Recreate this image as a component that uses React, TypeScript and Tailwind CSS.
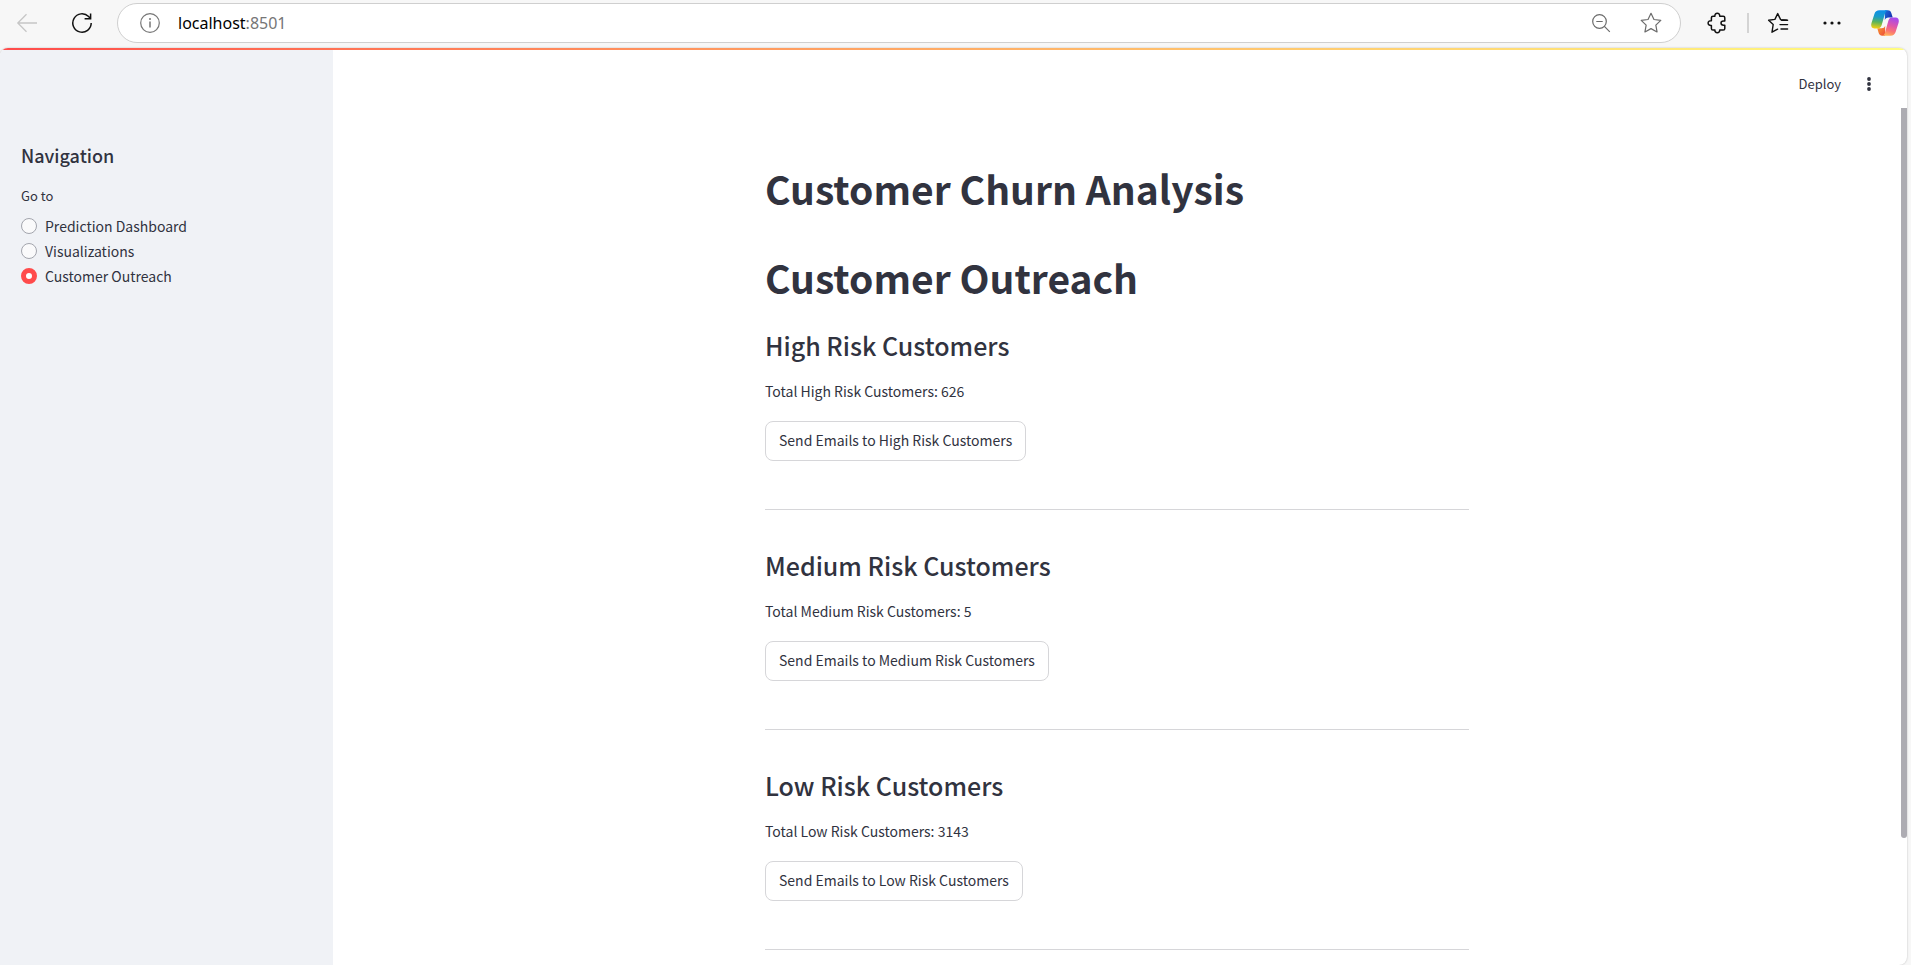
import { useState } from "react";

const sourceSans = "font-['Noto_Sans_CJK_SC',sans-serif]";

const pages = ["Prediction Dashboard", "Visualizations", "Customer Outreach"];

const segments = [
  { level: "High", total: 626 },
  { level: "Medium", total: 5 },
  { level: "Low", total: 3143 },
];

const starPath =
  "M10 1.2 L12.7 6.8 L18.9 7.6 L14.4 11.9 L15.5 18.1 L10 15.1 L4.5 18.1 L5.6 11.9 L1.1 7.6 L7.3 6.8 Z";

function CopilotLogo() {
  return (
    <svg viewBox="0 0 28 26" className="h-[26px] w-7" aria-hidden="true">
      <defs>
        <linearGradient id="cpLeft" x1="0.4" y1="0" x2="0.3" y2="1">
          <stop offset="0" stopColor="#0d8fe8" />
          <stop offset="0.35" stopColor="#1a9cc8" />
          <stop offset="0.65" stopColor="#5cb45a" />
          <stop offset="1" stopColor="#f5cf10" />
        </linearGradient>
        <linearGradient id="cpTop" x1="0" y1="0" x2="1" y2="0.6">
          <stop offset="0" stopColor="#1b6fd8" />
          <stop offset="1" stopColor="#1a2fb0" />
        </linearGradient>
        <linearGradient id="cpRight" x1="0.7" y1="0" x2="0.4" y2="1">
          <stop offset="0" stopColor="#a348f0" />
          <stop offset="0.45" stopColor="#e056a8" />
          <stop offset="0.75" stopColor="#fb7573" />
          <stop offset="1" stopColor="#ffae58" />
        </linearGradient>
        <linearGradient id="cpBottom" x1="0" y1="0" x2="1" y2="1">
          <stop offset="0" stopColor="#f8a030" />
          <stop offset="1" stopColor="#ec4a3c" />
        </linearGradient>
      </defs>
      <path d="M14 0.3 H16.8 C18.8 0.3 19.9 1.5 20.4 3.2 L21.7 7.6 H17.5 C15.6 7.6 14.3 8.6 13.8 10.3 Z" fill="url(#cpTop)" />
      <path d="M14 25.7 H11.2 C9.2 25.7 8.1 24.5 7.6 22.8 L6.3 18.2 H10.5 C12.4 18.2 13.7 17.4 14.2 15.7 Z" fill="url(#cpBottom)" />
      <path d="M8.4 0.3 H17 C15.2 0.5 14.5 2 14 3.6 L10.7 15 C10 17.3 8.8 18.4 6.6 18.4 H3.3 C0.4 18.4 -0.3 15.8 0.5 13 L3.4 4 C4.2 1.6 5.8 0.3 8.4 0.3 Z" fill="url(#cpLeft)" />
      <path d="M19.6 25.7 H11 C12.8 25.5 13.5 24 14 22.4 L17.3 11 C18 8.7 19.2 7.6 21.4 7.6 H24.7 C27.6 7.6 28.3 10.2 27.5 13 L24.6 22 C23.8 24.4 22.2 25.7 19.6 25.7 Z" fill="url(#cpRight)" />
    </svg>
  );
}

function BrowserBar() {
  return (
    <header className="flex h-12 shrink-0 items-start pt-[3px] pr-3 pl-4">
      <div className="flex h-10 w-[101px] shrink-0 items-center">
        <button aria-label="Back" className="flex w-[22px] justify-center">
          <svg viewBox="0 0 22 20" className="h-5 w-[22px]" fill="none" stroke="#c6c6c6" strokeWidth="1.3">
            <path d="M10.5 1.2 L1.8 10 L10.5 18.8 M1.8 10 H21" />
          </svg>
        </button>
        <button aria-label="Refresh" className="ml-[33px] flex w-[22px] justify-center">
          <svg viewBox="0 0 22 22" className="h-[22px] w-[22px]" fill="none" stroke="#111" strokeWidth="1.5">
            <path d="M20.2 11 A9.2 9.2 0 1 1 17.6 4.6 L19.6 6.6" />
            <path d="M19.6 1.6 V6.7 H13.6" />
          </svg>
        </button>
      </div>
      <div className="flex h-10 min-w-0 flex-1 items-center rounded-full border border-[#cfcfcf] bg-white pr-[18px] pl-[22px]">
        <svg viewBox="0 0 20 20" className="h-5 w-5 shrink-0" fill="none" stroke="#767676" strokeWidth="1.2" aria-hidden="true">
          <circle cx="10" cy="10" r="9.3" />
          <path d="M10 8.6 V14.4" strokeWidth="1.5" />
          <circle cx="10" cy="5.9" r="1" fill="#767676" stroke="none" />
        </svg>
        <a
          href="#"
          className="ml-[18px] min-w-0 flex-1 font-['Noto_Sans',sans-serif] text-base text-black"
        >
          localhost<span className="text-[#767676]">:8501</span>
        </a>
        <button aria-label="Zoom out" className="flex">
          <svg viewBox="0 0 20 20" className="h-5 w-5" fill="none" stroke="#6b6b6b" strokeWidth="1.2">
            <circle cx="8.5" cy="8.5" r="6.8" />
            <path d="M13.4 13.4 L18.8 18.8 M5.3 8.5 H11.7" />
          </svg>
        </button>
        <button aria-label="Add to favourites" className="ml-[29px] flex">
          <svg viewBox="0 0 20 20" className="h-[22px] w-[22px]" fill="none" stroke="#6b6b6b" strokeWidth="1.1" strokeLinejoin="round">
            <path d={starPath} />
          </svg>
        </button>
      </div>
      <div className="ml-[25px] flex h-10 shrink-0 items-center">
        <button aria-label="Extensions" className="flex">
          <svg viewBox="0 0 22 22" className="h-[22px] w-[22px]" fill="none" stroke="#111" strokeWidth="1.5" strokeLinejoin="round">
            <path d="M7 4.2 H8.9 C8.7 2.4 9.8 1.3 11.3 1.3 C12.8 1.3 13.9 2.4 13.7 4.2 H17.2 C18.2 4.2 18.8 4.8 18.8 5.8 V9 H17.6 C16 9 15 9.8 15 11.1 C15 12.4 16 13.2 17.6 13.2 H18.8 V16.4 C18.8 17.4 18.2 18 17.2 18 H13.7 C13.9 19.7 12.8 20.7 11.3 20.7 C9.8 20.7 8.7 19.7 8.9 18 H7 C6 18 5.4 17.4 5.4 16.4 V13.5 C3.3 13.7 2.1 12.6 2.1 11.1 C2.1 9.6 3.3 8.5 5.4 8.7 V5.8 C5.4 4.8 6 4.2 7 4.2 Z" />
          </svg>
        </button>
        <span className="ml-[19px] h-5 w-0.5 bg-[#d4d4d4]" />
        <button aria-label="Favourites" className="ml-[18px] flex">
          <svg viewBox="0 0 22 22" className="h-[22px] w-[22px]" fill="none" stroke="#111" strokeWidth="1.4" strokeLinejoin="round" strokeLinecap="round">
            <path d="M19.6 8.2 L13.6 7.6 L10.7 1.6 L7.9 7.4 L1.6 8.2 L6.2 12.5 L5 20.2 L10.6 17.2" />
            <path d="M14.6 8.2 H20.6 M13 12.6 H20.6 M14 17 H20.6" />
          </svg>
        </button>
        <button aria-label="Settings and more" className="ml-[33px] flex">
          <svg viewBox="0 0 20 4" className="h-1 w-5" fill="#111">
            <circle cx="3" cy="2" r="1.6" />
            <circle cx="10" cy="2" r="1.6" />
            <circle cx="17" cy="2" r="1.6" />
          </svg>
        </button>
        <button aria-label="Copilot" className="ml-[29px] flex">
          <CopilotLogo />
        </button>
      </div>
    </header>
  );
}

function Sidebar() {
  const [page, setPage] = useState("Customer Outreach");
  return (
    <aside className="w-[333px] shrink-0 bg-[#f0f2f6] px-[21px] pt-[95px]">
      <h2 className="text-lg leading-6 font-medium">Navigation</h2>
      <fieldset className="mt-[19px]">
        <legend className="text-[13px] leading-5">Go to</legend>
        <div className="mt-[7px]">
          {pages.map((name) => (
            <label key={name} className="flex h-[25px] items-center gap-2 text-sm leading-5">
              <input
                type="radio"
                name="page"
                checked={page === name}
                onChange={() => setPage(name)}
                className="h-4 w-4 appearance-none rounded-full border border-[#a3a5ad] bg-[#fafafb] checked:border-[5px] checked:border-[#ff4b4b] checked:bg-white"
              />
              {name}
            </label>
          ))}
        </div>
      </fieldset>
    </aside>
  );
}

export default function App() {
  return (
    <div className={`flex h-screen flex-col overflow-hidden bg-[#f7f7f7] text-[#31333f] ${sourceSans}`}>
      <BrowserBar />
      <div className="relative mr-1 flex min-h-0 flex-1 overflow-hidden rounded-t-lg rounded-br-lg bg-white shadow-[0_0_2px_rgba(0,0,0,0.25)]">
        <div className="absolute inset-x-0 top-0 h-0.5 bg-linear-to-r from-[#ff4b4b] to-[#fffd80]" />
        <Sidebar />
        <main className="min-w-0 flex-1 pr-1.5">
          <div className="flex h-[60px] items-center justify-end gap-[23px] pt-3 pr-[27px]">
            <button className="text-[13px] leading-5">Deploy</button>
            <button aria-label="Main menu" className="flex">
              <svg viewBox="0 0 10 16" className="h-4 w-2.5" fill="#31333f">
                <circle cx="5" cy="3" r="1.9" />
                <circle cx="5" cy="8" r="1.9" />
                <circle cx="5" cy="13" r="1.9" />
              </svg>
            </button>
          </div>
          <div className="mx-auto w-full max-w-[704px] pt-[54px]">
            <h1 className="text-[39px] leading-[53px] font-bold">Customer Churn Analysis</h1>
            <h1 className="mt-9 mb-6 text-[39px] leading-[53px] font-bold">Customer Outreach</h1>
            {segments.map(({ level, total }) => (
              <section key={level} className="mb-[38px]">
                <h2 className="text-[25px] leading-[34px] font-medium">{level} Risk Customers</h2>
                <p className="mt-4 text-sm leading-[26px]">
                  Total {level} Risk Customers: {total}
                </p>
                <button className="mt-[17px] block h-10 rounded-lg border border-[#d6d6d9] bg-white px-[13px] pb-0.5 text-sm leading-6">
                  Send Emails to {level} Risk Customers
                </button>
                <hr className="mt-12 border-[#d6d6d9]" />
              </section>
            ))}
          </div>
        </main>
        <div className="absolute top-[60px] right-0 h-[730px] w-1.5 rounded-b-full bg-[#adacb2]" />
      </div>
    </div>
  );
}
